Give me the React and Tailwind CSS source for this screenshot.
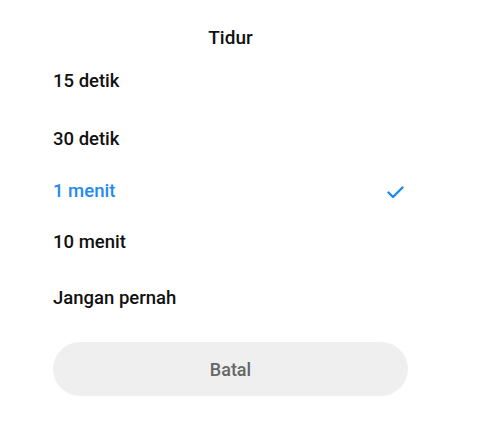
import React, { useState } from 'react'

const options = [
  { label: '15 detik', h: 'h-[60px]' },
  { label: '30 detik', h: 'h-[56px]' },
  { label: '1 menit', h: 'h-[48px]' },
  { label: '10 menit', h: 'h-[54px]' },
  { label: 'Jangan pernah', h: 'h-[58px]' },
]

function Check() {
  return (
    <svg width="17" height="13" viewBox="0 0 17 13" fill="none">
      <path d="M1.5 6.5l4.5 4.5L15.5 1.5" stroke="currentColor" strokeWidth="2.4" strokeLinecap="round" strokeLinejoin="round" />
    </svg>
  )
}

export default function App() {
  const [selected, setSelected] = useState('1 menit')

  return (
    <div className="w-[483px] h-[431px] bg-white" style={{ fontFamily: 'Roboto, "Noto Sans", sans-serif' }}>
      <div className="ml-[53px] w-[355px]">
        <div className="pt-[26px] pb-[2px] text-center text-[19px] leading-[24px] font-medium text-[#111]">
          Tidur
        </div>

        {options.map(o => {
          const active = o.label === selected
          return (
            <button
              key={o.label}
              onClick={() => setSelected(o.label)}
              className={`w-full flex items-center justify-between text-left text-[18.5px] font-medium ${o.h} ${
                active ? 'text-[#1f8af0]' : 'text-[#111]'
              }`}
            >
              <span>{o.label}</span>
              {active && (
                <span className="pr-[4px] text-[#1f8af0]">
                  <Check />
                </span>
              )}
            </button>
          )
        })}

        <button className="mt-[14px] w-full h-[54px] rounded-full bg-[#efefef] text-[18px] font-medium text-[#666]">
          Batal
        </button>
      </div>
    </div>
  )
}
